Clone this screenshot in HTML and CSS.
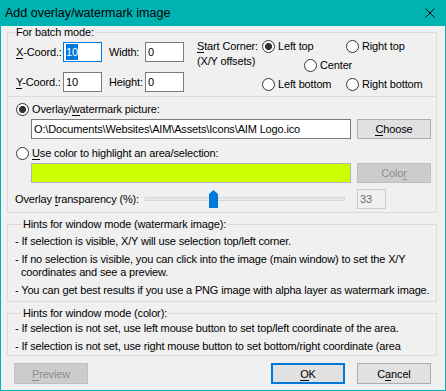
FILE: index.html
```html
<!DOCTYPE html>
<html lang="en">
<head>
  <meta charset="UTF-8">
  <title>Add overlay/watermark image</title>
  <link rel="stylesheet" href="styles.css">
</head>
<body>
  <div class="window">
    <div class="titlebar">
      <span class="title">Add overlay/watermark image</span>
      <svg class="close" width="10" height="10" viewBox="0 0 10 10">
        <path d="M0.5 0.5 L9.5 9.5 M9.5 0.5 L0.5 9.5" stroke="#000" stroke-width="1" fill="none"/>
      </svg>
    </div>

    <div class="content">
      <fieldset class="group batch">
        <legend>For batch mode:</legend>
        <div class="batch-row">
          <div class="coords">
            <label><u>X</u>-Coord.:</label>
            <div class="edit focused"><span class="selected">10</span></div>
            <label class="pad">Width:</label>
            <div class="edit">0</div>
            <label><u>Y</u>-Coord.:</label>
            <div class="edit">10</div>
            <label class="pad">Height:</label>
            <div class="edit">0</div>
          </div>
          <div class="corner-label"><u>S</u>tart Corner:<br>(X/Y offsets)</div>
          <div class="corner-options">
            <div class="corner-row">
              <label class="radio wide"><input type="radio" name="corner" checked><span>Left top</span></label>
              <label class="radio"><input type="radio" name="corner"><span>Right top</span></label>
            </div>
            <div class="corner-row center">
              <label class="radio"><input type="radio" name="corner"><span>Center</span></label>
            </div>
            <div class="corner-row">
              <label class="radio wide"><input type="radio" name="corner"><span>Left bottom</span></label>
              <label class="radio"><input type="radio" name="corner"><span>Right bottom</span></label>
            </div>
          </div>
        </div>
      </fieldset>

      <div class="group overlay">
        <label class="radio"><input type="radio" name="mode" checked><span>Overlay/<u>w</u>atermark picture:</span></label>
        <div class="field-row">
          <div class="edit path">O:\Documents\Websites\AIM\Assets\Icons\AIM Logo.ico</div>
          <button class="btn"><u>C</u>hoose</button>
        </div>
        <label class="radio"><input type="radio" name="mode"><span><u>U</u>se color to highlight an area/selection:</span></label>
        <div class="field-row">
          <div class="swatch"></div>
          <button class="btn" disabled>Colo<u>r</u></button>
        </div>
        <div class="transparency">
          <span class="t-label">Overlay <u>t</u>ransparency (%):</span>
          <div class="slider">
            <div class="track"></div>
            <svg class="thumb" style="left: 64px" width="9" height="18" viewBox="0 0 9 18">
              <path d="M0 4 L4.5 0 L9 4 L9 18 L0 18 Z" fill="#0078d7"/>
            </svg>
          </div>
          <div class="edit small disabled">33</div>
        </div>
      </div>

      <fieldset class="group hints">
        <legend>Hints for window mode (watermark image):</legend>
        <p>- If selection is visible, X/Y will use selection top/left corner.</p>
        <p>- If no selection is visible, you can click into the image (main window) to set the X/Y coordinates and see a preview.</p>
        <p>- You can get best results if you use a PNG image with alpha layer as watermark image.</p>
      </fieldset>

      <fieldset class="group hints clipped">
        <legend>Hints for window mode (color):</legend>
        <div class="clip">
          <p>- If selection is not set, use left mouse button to set top/left coordinate of the area.</p>
          <p>- If selection is not set, use right mouse button to set bottom/right coordinate (area selection).</p>
        </div>
      </fieldset>

      <div class="buttons">
        <button class="btn" disabled><u>P</u>review</button>
        <div class="right">
          <button class="btn default"><u>O</u>K</button>
          <button class="btn">C<u>a</u>ncel</button>
        </div>
      </div>
    </div>
  </div>
</body>
</html>
```

FILE: styles.css
```css
* {
  box-sizing: border-box;
}
body {
  margin: 0;
  font-family: "Liberation Sans", Arial, sans-serif;
  font-size: 11px;
  letter-spacing: -0.15px;
  color: #000;
  background: #fff;
}
.window {
  width: 446px;
  height: 391px;
  background: #f0f0f0;
  border: 1px solid #00b3b3;
  border-top: none;
  overflow: hidden;
}
.titlebar {
  height: 26px;
  margin: 0 -1px;
  background: #00b3b3;
  display: flex;
  align-items: center;
  justify-content: space-between;
  padding: 0 11px 0 5px;
}
.title {
  font-size: 12.5px;
  letter-spacing: 0;
}
.content {
  padding: 0 8px 0 6px;
}
u {
  text-decoration: none;
  border-bottom: 1px solid #000;
  line-height: 1;
}

/* group boxes */
.group {
  margin: 0;
  padding: 0;
  border: 1px solid #dcdcdc;
  min-width: 0;
}
legend {
  margin-left: 7px;
  padding: 0 1px;
  line-height: 12px;
  font-size: 11px;
}

/* batch */
.batch-row {
  display: flex;
  padding: 1px 0 4px 8px;
}
.coords {
  display: grid;
  grid-template-columns: 47px 39px 43px 39px;
  grid-auto-rows: 20px;
  row-gap: 10px;
  align-items: center;
  margin-top: 3px;
  white-space: nowrap;
}
.coords .pad {
  padding-left: 7px;
}
.corner-label {
  margin-left: 13px;
  width: 65px;
  line-height: 15px;
  white-space: nowrap;
}
.corner-options {
  display: flex;
  flex-direction: column;
  gap: 5px;
}
.corner-row {
  display: flex;
  height: 14px;
  align-items: center;
}
.corner-row .wide {
  width: 84px;
}
.corner-row.center {
  padding-left: 42px;
}

/* edits */
.edit {
  height: 20px;
  background: #fff;
  border: 1px solid #7a7a7a;
  display: flex;
  align-items: center;
  padding-left: 2px;
  white-space: nowrap;
  overflow: hidden;
}
.edit.focused {
  border-color: #0078d7;
}
.selected {
  background: #0078d7;
  color: #fff;
  padding: 2px 0;
}
.edit.disabled {
  background: #f0f0f0;
  border-color: #cccccc;
  color: #6d6d6d;
}

/* radios */
.radio {
  display: flex;
  align-items: center;
  gap: 3px;
  white-space: nowrap;
  height: 14px;
}
.radio input {
  appearance: none;
  margin: 0;
  width: 13px;
  height: 13px;
  border: 1px solid #333;
  border-radius: 50%;
  background: #fff;
  flex: none;
}
.radio input:checked {
  background: radial-gradient(circle, #333 0 3.3px, #fff 3.8px);
}

/* overlay group */
.overlay {
  border-top: none;
  padding: 5px 5px 3px 8px;
  display: flex;
  flex-direction: column;
}
.overlay > .radio + .field-row {
  margin-top: 3px;
}
.overlay > .field-row + .radio {
  margin-top: 7px;
}
.field-row {
  display: flex;
  gap: 6px;
  padding-left: 15px;
  height: 20px;
}
.path {
  width: 321px;
}
.swatch {
  width: 321px;
  height: 20px;
  background: #ccff00;
  border: 1px solid #b4b4b4;
}
.transparency {
  display: flex;
  align-items: center;
  height: 20px;
  margin-top: 6px;
}
.t-label {
  width: 130px;
  margin-left: -1px;
}
.slider {
  position: relative;
  width: 200px;
  height: 20px;
}
.track {
  position: absolute;
  left: 0;
  right: 0;
  top: 8px;
  height: 4px;
  background: #e7eaea;
  border: 1px solid #d6d6d6;
}
.thumb {
  position: absolute;
  top: 1px;
}
.edit.small {
  width: 29px;
  margin-left: 12px;
}

/* buttons */
.btn {
  font-family: inherit;
  font-size: 11px;
  letter-spacing: inherit;
  width: 74px;
  height: 21px;
  background: #e1e1e1;
  border: 1px solid #adadad;
  color: #000;
  padding: 0;
  flex: none;
}
.field-row .btn {
  height: 20px;
}
.btn:disabled {
  background: #cccccc;
  border-color: #bfbfbf;
  color: #8c8c8c;
}
.btn:disabled u {
  border-color: #8c8c8c;
}
.btn.default {
  border: 2px solid #0078d7;
}

/* hints */
.hints {
  margin-top: 5px;
  padding: 5px 6px 4px 7px;
}
.hints p {
  margin: 0;
  line-height: 13px;
  padding-left: 6px;
  text-indent: -6px;
}
.hints p + p {
  margin-top: 5px;
}
.hints.clipped {
  padding-top: 3px;
  padding-bottom: 0;
}
.clip {
  height: 33px;
  overflow: hidden;
}

.buttons {
  display: flex;
  justify-content: space-between;
  padding: 7px 6px 0 7px;
}
.buttons .right {
  display: flex;
  gap: 12px;
}
```
